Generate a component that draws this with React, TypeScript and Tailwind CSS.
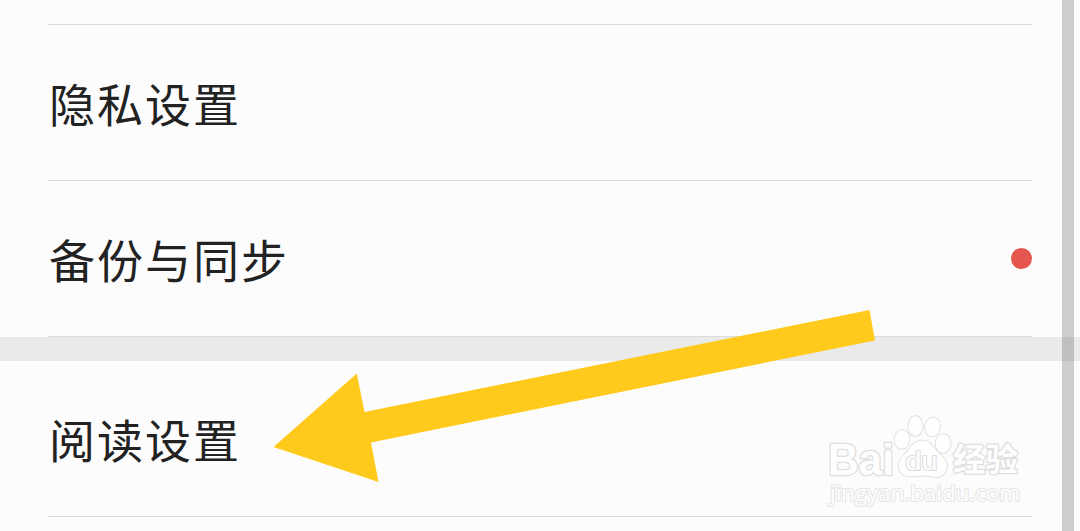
import React from "react";

interface SettingRowProps {
  label: string;
  hasBadge?: boolean;
}

function SettingRow({ label, hasBadge }: SettingRowProps) {
  return (
    <div className="mx-12 flex h-[156px] items-center justify-between border-b border-[#dcdcdc]">
      <span className="pb-px pl-px text-[46px] leading-none tracking-[2px] text-[#222222]">
        {label}
      </span>
      {hasBadge && <span className="h-[21px] w-[21px] rounded-full bg-[#e5564e]" />}
    </div>
  );
}

function Arrow() {
  return (
    <svg
      className="pointer-events-none absolute left-0 top-0"
      width="1080"
      height="531"
      viewBox="0 0 1080 531"
    >
      <polygon
        points="273.5,447 356.8,373.5 364.5,412 869.5,310 875,340.5 371,442.5 378.5,482"
        fill="#ffca1b"
      />
    </svg>
  );
}

function Watermark() {
  return (
    <svg
      className="pointer-events-none absolute left-[820px] top-[405px]"
      width="210"
      height="110"
      viewBox="0 0 210 110"
    >
      <g
        fill="#fefefe"
        stroke="#dedede"
        strokeWidth="2.6"
        strokeLinejoin="round"
        paintOrder="stroke"
        fontFamily="'Liberation Sans', 'Noto Sans CJK SC', sans-serif"
        fontWeight="700"
      >
        <text x="8" y="70" fontSize="44" textLength="66" lengthAdjust="spacingAndGlyphs">
          Bai
        </text>
        {/* Paw */}
        <g stroke="#dadada" strokeWidth="1.6">
          <ellipse cx="82" cy="34.5" rx="7.5" ry="9.5" />
          <ellipse cx="95.5" cy="21" rx="7.2" ry="10" />
          <ellipse cx="112.5" cy="22" rx="7.5" ry="9.5" transform="rotate(12 112.5 22)" />
          <ellipse cx="123.2" cy="38.5" rx="7.5" ry="9.5" />
          <path d="M102 35.5c7 0 10 4 13.5 9 4 5.500 11.500 8.500 11.500 16 0 7-5 11.500-11 11.500-5 0-9-1.500-13-1.500s-8 1-12.500 1c-7 0-12-4.500-12-11 0-7 6-10 9.500-15 3.500-5 7-10 14-10z" />
        </g>
        <text
          x="85.5"
          y="65"
          fontSize="26"
          fontWeight="400"
          strokeWidth="2.2"
          textLength="32"
          lengthAdjust="spacingAndGlyphs"
        >
          du
        </text>
        <text x="133" y="66" fontSize="32" textLength="65" lengthAdjust="spacingAndGlyphs">
          经验
        </text>
        <text
          x="10"
          y="96"
          fontSize="22"
          fontFamily="'Open Sans', sans-serif"
          fontWeight="400"
          stroke="#e6e6e6"
          strokeWidth="2.2"
          textLength="190"
          lengthAdjust="spacingAndGlyphs"
        >
          jingyan.baidu.com
        </text>
      </g>
    </svg>
  );
}

export default function App() {
  return (
    <div className="relative h-[531px] w-[1080px] overflow-hidden bg-[#fcfcfc] font-['Noto_Sans_CJK_SC',sans-serif]">
      <div className="mx-12 h-[25px] border-b border-[#dcdcdc]" />
      <SettingRow label="隐私设置" />
      <SettingRow label="备份与同步" hasBadge />
      <div className="h-6 bg-[#eaeaea]" />
      <SettingRow label="阅读设置" />

      {/* Scrollbar */}
      <div className="absolute right-1.5 top-0 h-full w-3 bg-black/[0.18]" />

      <Arrow />
      <Watermark />
    </div>
  );
}
